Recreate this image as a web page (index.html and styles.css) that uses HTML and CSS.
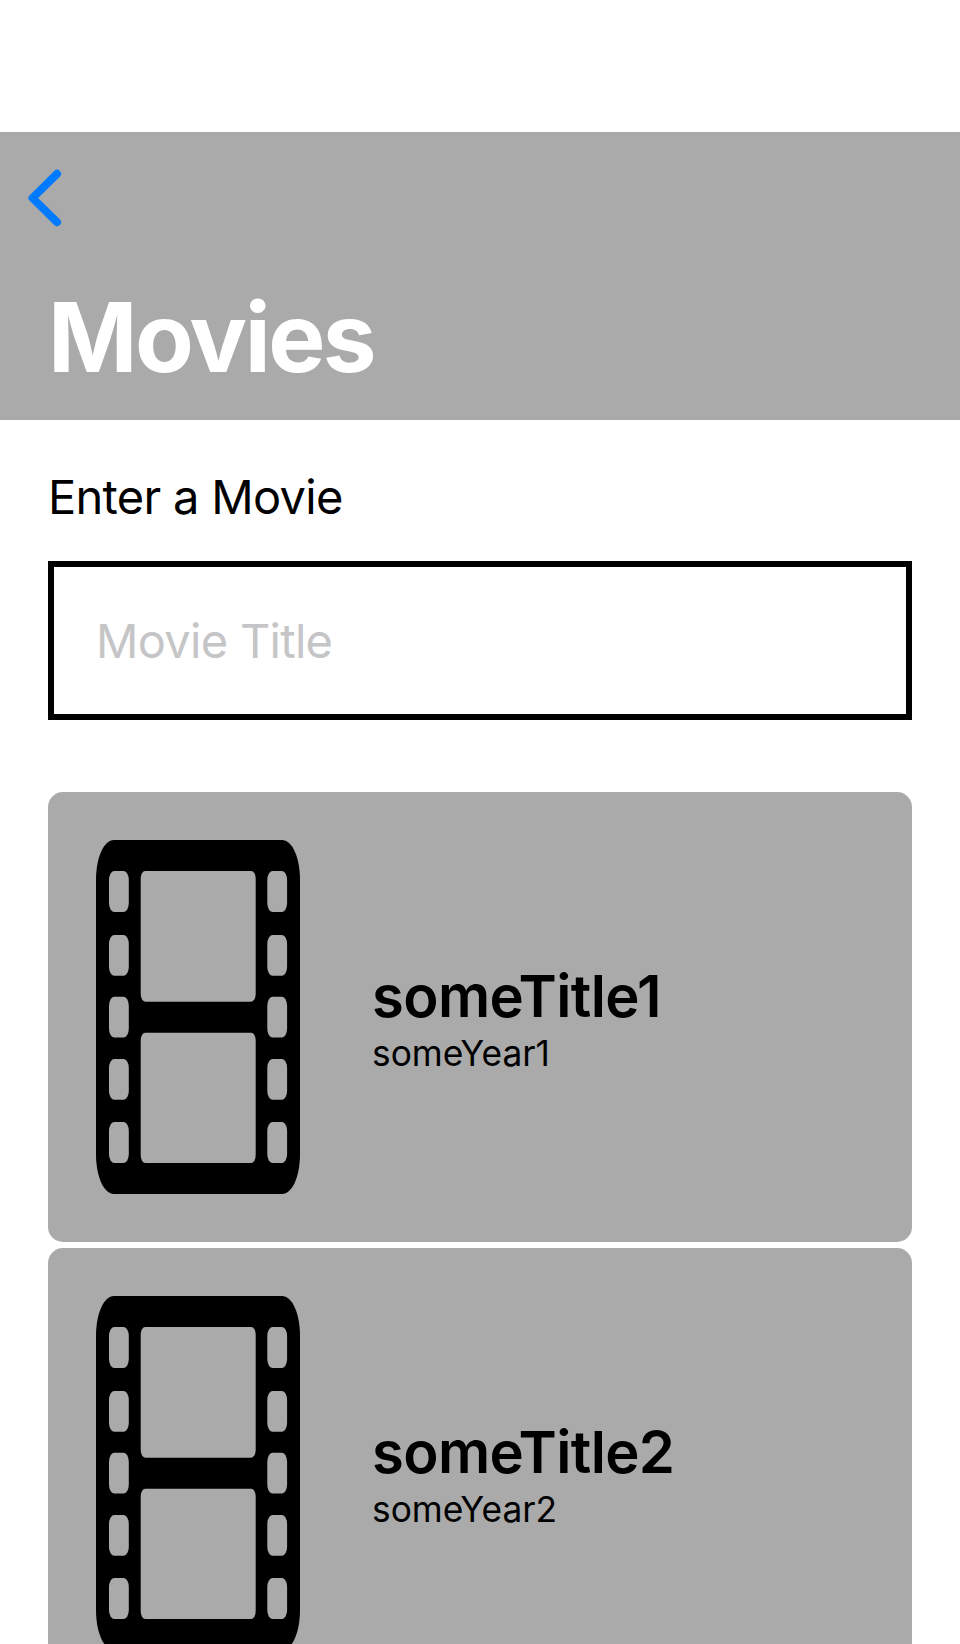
FILE: index.html
```html
<!DOCTYPE html>
<html lang="en">
<head>
<meta charset="utf-8">
<title>Movies</title>
<link rel="stylesheet" href="styles.css">
</head>
<body>
<svg class="defs" aria-hidden="true">
  <symbol id="film" viewBox="0 0 204 354">
    <path fill-rule="evenodd" d="M18 0H186C196 0 204 17 204 40V314C204 337 196 354 186 354H18C8 354 0 337 0 314V40C0 17 8 0 18 0Z"/>
    <g class="hole">
      <rect x="44.7" y="31" width="115" height="130.7" rx="4.5" ry="8"/>
      <rect x="44.7" y="192.7" width="115" height="130.3" rx="4.5" ry="8"/>
      <rect x="13" y="31" width="19.8" height="41" rx="5" ry="9"/>
      <rect x="13" y="95" width="19.8" height="40.7" rx="5" ry="9"/>
      <rect x="13" y="156.8" width="19.8" height="40.7" rx="5" ry="9"/>
      <rect x="13" y="219" width="19.8" height="40.7" rx="5" ry="9"/>
      <rect x="13" y="282" width="19.8" height="41" rx="5" ry="9"/>
      <rect x="171.3" y="31" width="19.8" height="41" rx="5" ry="9"/>
      <rect x="171.3" y="95" width="19.8" height="40.7" rx="5" ry="9"/>
      <rect x="171.3" y="156.8" width="19.8" height="40.7" rx="5" ry="9"/>
      <rect x="171.3" y="219" width="19.8" height="40.7" rx="5" ry="9"/>
      <rect x="171.3" y="282" width="19.8" height="41" rx="5" ry="9"/>
    </g>
  </symbol>
</svg>
<header class="header">
  <svg class="back" viewBox="0 0 34 58"><path d="M29 4.8L4.5 29L29 53.2"/></svg>
  <h1 class="heading"><span>Movies</span></h1>
</header>
<main class="content">
  <label class="label" for="title"><span>Enter a Movie</span></label>
  <input class="field" id="title" type="text" placeholder="Movie Title">
  <div class="list">
    <article class="card">
      <svg class="film"><use href="#film"/></svg>
      <div class="info">
        <h2 class="title"><span>someTitle1</span></h2>
        <p class="year"><span>someYear1</span></p>
      </div>
    </article>
    <article class="card">
      <svg class="film"><use href="#film"/></svg>
      <div class="info">
        <h2 class="title"><span>someTitle2</span></h2>
        <p class="year"><span>someYear2</span></p>
      </div>
    </article>
  </div>
</main>
</body>
</html>
```
FILE: styles.css
```css
* { box-sizing: border-box; }
body {
  margin: 0;
  height: 1644px;
  overflow: hidden;
  padding-top: 132px;
  background: #fff;
  color: #000;
  font-family: Inter, "Liberation Sans", sans-serif;
}
.defs { display: none; }
.header {
  height: 288px;
  padding: 37px 0 0 28px;
  background: #aaa;
}
.back {
  display: block;
  width: 34px;
  height: 58px;
  fill: none;
  stroke: #007aff;
  stroke-width: 8;
  stroke-linecap: round;
  stroke-linejoin: round;
}
.heading {
  margin: 50px 0 0 20px;
  font-size: 96px;
  line-height: 120px;
  font-weight: 700;
  letter-spacing: -2.5px;
  color: #fff;
}
.content { padding: 49px 48px 0; }
.label {
  display: block;
  margin-bottom: 36px;
  font-size: 47px;
  line-height: 56px;
  letter-spacing: -0.7px;
}
.field {
  display: block;
  width: 100%;
  height: 159px;
  padding: 0 42px;
  border: 6px solid #000;
  border-radius: 0;
  background: #fff;
  font: 400 47px Inter, "Liberation Sans", sans-serif;
  letter-spacing: -0.7px;
}
.field::placeholder { color: #c5c5c7; opacity: 1; }
.list {
  display: flex;
  flex-direction: column;
  gap: 6px;
  margin-top: 72px;
}
.card {
  display: flex;
  align-items: center;
  gap: 72px;
  height: 450px;
  padding: 0 48px;
  border-radius: 15px;
  background: #aaa;
}
.film { width: 204px; height: 354px; }
.hole { fill: #aaa; }
.info { padding-top: 3px; }
.title {
  margin: 0;
  font-size: 58px;
  line-height: 70px;
  font-weight: 600;
  letter-spacing: -0.65px;
}
.year {
  margin: 0;
  font-size: 35.3px;
  line-height: 45px;
}
```
